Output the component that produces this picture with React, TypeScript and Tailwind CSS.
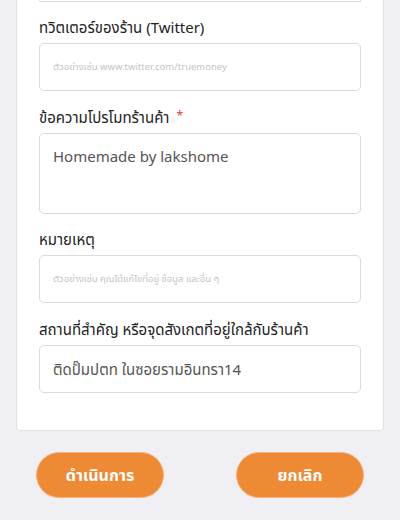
import React from "react";

const font = { fontFamily: '"Noto Sans", "Noto Sans Thai", "DejaVu Sans", sans-serif' };

interface FieldProps {
    label: string;
    required?: boolean;
    value?: string;
    placeholder?: string;
    tall?: boolean;
}

const Field = ({ label, required = false, value, placeholder, tall = false }: FieldProps) => {
    return (
        <div className="flex flex-col">
            <label className="flex items-start text-[15px] leading-[24px] text-[#222] mb-[4px]">
                {label}
                {required && <span className="text-[#e53935] text-[12px] leading-[22px] ml-[7px]">*</span>}
            </label>
            <div
                className={`border border-[#d9d9de] rounded-[5px] bg-white px-[13px] ${
                    tall ? "h-[81px] pt-[10px]" : "h-[48px] flex items-center"
                }`}
            >
                {value ? (
                    <span className="text-[15px] text-[#555] leading-[24px]">{value}</span>
                ) : (
                    <span className="text-[9.5px] text-[#c4c4c8]">{placeholder}</span>
                )}
            </div>
        </div>
    );
};

const App = () => {
    return (
        <div className="w-[400px] h-[520px] bg-[#efeff4] overflow-hidden" style={font}>
            <div className="mx-[16px] bg-white border-x border-b border-[#e0e0e5] rounded-b-[5px] px-[22px] pb-[37px]">
                <div className="h-[2px] border-x border-b border-[#d9d9de] rounded-b-[5px]" />
                <div className="flex flex-col gap-[14px] pt-[13px]">
                    <Field label="ทวิตเตอร์ของร้าน (Twitter)" placeholder="ตัวอย่างเช่น www.twitter.com/truemoney" />
                    <Field label="ข้อความโปรโมทร้านค้า" required value="Homemade by lakshome" tall />
                    <div className="-mt-[1px]">
                        <Field label="หมายเหตุ" placeholder="ตัวอย่างเช่น คุณได้แก้ไขที่อยู่ ข้อมูล และอื่น ๆ" />
                    </div>
                    <Field label="สถานที่สำคัญ หรือจุดสังเกตที่อยู่ใกล้กับร้านค้า" value="ติดปั๊มปตท ในซอยรามอินทรา14" />
                </div>
            </div>
            <div className="flex justify-between px-[36px] pt-[21px]">
                <button className="w-[128px] h-[46px] rounded-full bg-[#ee8a34] border border-[#f6b27a] text-white text-[16px] font-bold">
                    ดำเนินการ
                </button>
                <button className="w-[128px] h-[46px] rounded-full bg-[#ee8a34] border border-[#f6b27a] text-white text-[16px] font-bold">
                    ยกเลิก
                </button>
            </div>
        </div>
    );
};

export default App;
